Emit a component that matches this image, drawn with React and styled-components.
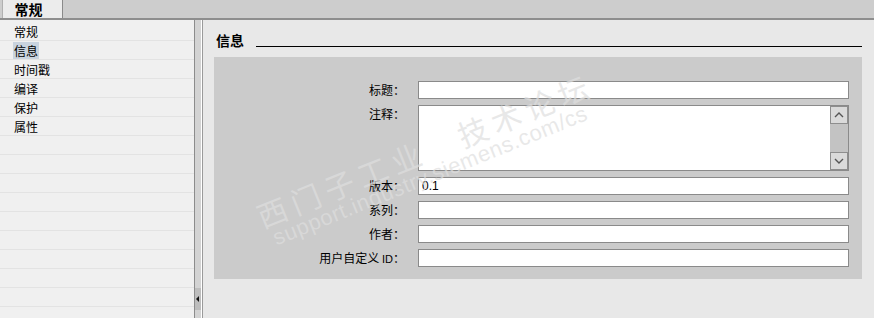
import React from "react";
import styled, { createGlobalStyle } from "styled-components";

const Global = createGlobalStyle`
  html, body { margin: 0; padding: 0; background: #e8e8e8; }
  body { font-family: "Noto Sans CJK SC", "Liberation Sans", sans-serif; }
`;

const CJK = `"Noto Sans CJK SC", "Liberation Sans", sans-serif`;

const Root = styled.div`
  position: relative;
  width: 874px;
  height: 318px;
  overflow: hidden;
  display: flex;
  flex-direction: column;
  font-family: ${CJK};
  font-size: 12px;
  color: #000;
`;

const TabBar = styled.div`
  height: 18px;
  background: #cdcdcd;
  border-bottom: 2px solid #8e8e8e;
  display: flex;
  padding-left: 2px;
`;

const Tab = styled.div`
  width: 61px;
  height: 18px;
  background: #ececec;
  border-left: 1px solid #b0b0b0;
  border-right: 1px solid #8a8a8a;
  display: flex;
  align-items: center;
  justify-content: center;
  font-size: 14px;
  font-weight: 700;
  line-height: 18px;
  padding-right: 8px;
  box-sizing: border-box;
`;

const Body = styled.div`
  flex: 1;
  display: flex;
  min-height: 0;
`;

const Sidebar = styled.div`
  width: 194px;
  background: #f0f0f0;
  padding-top: 2px;
  box-sizing: border-box;
  overflow: hidden;
`;

const Row = styled.div`
  height: 19px;
  border-bottom: 1px solid #e3e3e3;
  box-sizing: border-box;
  display: flex;
  align-items: center;
  padding-left: 13px;
  padding-right: 2px;
  font-size: 12px;
`;

const RowLabel = styled.span`
  line-height: 17px;
  padding: 0 1px;
  background: ${(p) => (p.$selected ? "#c9d3de" : "transparent")};
`;

const Splitter = styled.div`
  width: 9px;
  box-sizing: border-box;
  border-left: 1px solid #8c8c8c;
  border-right: 1px solid #9a9a9a;
  background: #d3d3d3;
  box-shadow: inset -1px 0 0 #ffffff;
  display: flex;
  flex-direction: column;
  justify-content: flex-end;
  padding-bottom: 8px;
`;

const CollapseButton = styled.div`
  height: 22px;
  width: 6px;
  background: #bdbdbd;
  display: flex;
  align-items: center;
  justify-content: center;
`;

const Main = styled.div`
  flex: 1;
  background: #e8e8e8;
  padding: 13px 12px 0 11px;
  box-sizing: border-box;
`;

const Header = styled.div`
  display: flex;
  align-items: flex-end;
  height: 15px;
`;

const Heading = styled.div`
  font-size: 14px;
  font-weight: 700;
  line-height: 15px;
  padding-left: 2px;
`;

const Rule = styled.div`
  flex: 1;
  margin-left: 12px;
  border-bottom: 1px solid #000;
  margin-bottom: 1px;
`;

const Box = styled.div`
  margin-top: 9px;
  background: #cbcbcb;
  padding: 24px 13px 12px 0;
  display: grid;
  grid-template-columns: 191px 1fr;
  column-gap: 13px;
  row-gap: 6px;
`;

const Label = styled.div`
  text-align: right;
  line-height: 18px;
  height: 18px;
  font-size: 12px;
  align-self: start;
  white-space: nowrap;
`;

const Latin = styled.span`
  font-family: "Liberation Sans", sans-serif;
  font-size: 11px;
`;

const Field = styled.div`
  height: 18px;
  box-sizing: border-box;
  background: #fff;
  border: 1px solid #8a8a8a;
  font-family: "Liberation Sans", sans-serif;
  font-size: 12px;
  line-height: 16px;
  padding-left: 3px;
`;

const AreaField = styled.div`
  height: 66px;
  box-sizing: border-box;
  background: #fff;
  border: 1px solid #8a8a8a;
  display: flex;
  justify-content: flex-end;
`;

const ScrollTrack = styled.div`
  width: 18px;
  background: #c3c3c3;
  display: flex;
  flex-direction: column;
  justify-content: space-between;
`;

const ScrollButton = styled.div`
  height: 18px;
  box-sizing: border-box;
  background: #dadada;
  border: 1px solid #8e8e8e;
  display: flex;
  align-items: center;
  justify-content: center;
`;

const Watermark = styled.div`
  position: absolute;
  left: ${(p) => p.$x}px;
  top: ${(p) => p.$y}px;
  transform: rotate(${(p) => p.$deg}deg);
  transform-origin: left center;
  color: rgba(222, 222, 222, 0.7);
  font-family: ${(p) => (p.$latin ? `"Liberation Sans", sans-serif` : CJK)};
  font-size: ${(p) => p.$size}px;
  letter-spacing: ${(p) => p.$ls}px;
  white-space: nowrap;
  pointer-events: none;
  line-height: 1;
`;

const Chevron = ({ up }) => (
  <svg width="10" height="6" viewBox="0 0 10 6">
    <path
      d={up ? "M1 5 L5 1 L9 5" : "M1 1 L5 5 L9 1"}
      fill="none"
      stroke="#555"
      strokeWidth="1.4"
    />
  </svg>
);

const items = ["常规", "信息", "时间戳", "编译", "保护", "属性"];
const fields = [
  { label: "标题：" },
  { label: "注释：", area: true },
  { label: "版本：", value: "0.1" },
  { label: "系列：" },
  { label: "作者：" },
  { label: "用户自定义", suffix: "ID", colon: "：" },
];

export default function App() {
  const rows = [...items, ...Array(9).fill("")];
  return (
    <Root>
      <Global />
      <TabBar>
        <Tab>常规</Tab>
      </TabBar>
      <Body>
        <Sidebar>
          {rows.map((t, i) => (
            <Row key={i}>
              {t && <RowLabel $selected={i === 1}>{t}</RowLabel>}
            </Row>
          ))}
        </Sidebar>
        <Splitter>
          <CollapseButton>
            <svg width="4" height="6" viewBox="0 0 4 6">
              <path d="M3 0 L0 3 L3 6 Z" fill="#111" />
            </svg>
          </CollapseButton>
        </Splitter>
        <Main>
          <Header>
            <Heading>信息</Heading>
            <Rule />
          </Header>
          <Box>
            {fields.map((f, i) => (
              <React.Fragment key={i}>
                <Label>
                  {f.suffix ? (
                    <>
                      {f.label} <Latin>{f.suffix}</Latin>
                      {f.colon}
                    </>
                  ) : (
                    f.label
                  )}
                </Label>
                {f.area ? (
                  <AreaField>
                    <ScrollTrack>
                      <ScrollButton>
                        <Chevron up />
                      </ScrollButton>
                      <ScrollButton>
                        <Chevron />
                      </ScrollButton>
                    </ScrollTrack>
                  </AreaField>
                ) : (
                  <Field>{f.value || ""}</Field>
                )}
              </React.Fragment>
            ))}
          </Box>
        </Main>
      </Body>
      <Watermark $x={258} $y={202} $deg={-22} $size={30} $ls={6}>
        西门子工业　技术论坛
      </Watermark>
      <Watermark $x={274} $y={228} $deg={-22} $size={22} $ls={0.6} $latin>
        support.industry.siemens.com/cs
      </Watermark>
    </Root>
  );
}
